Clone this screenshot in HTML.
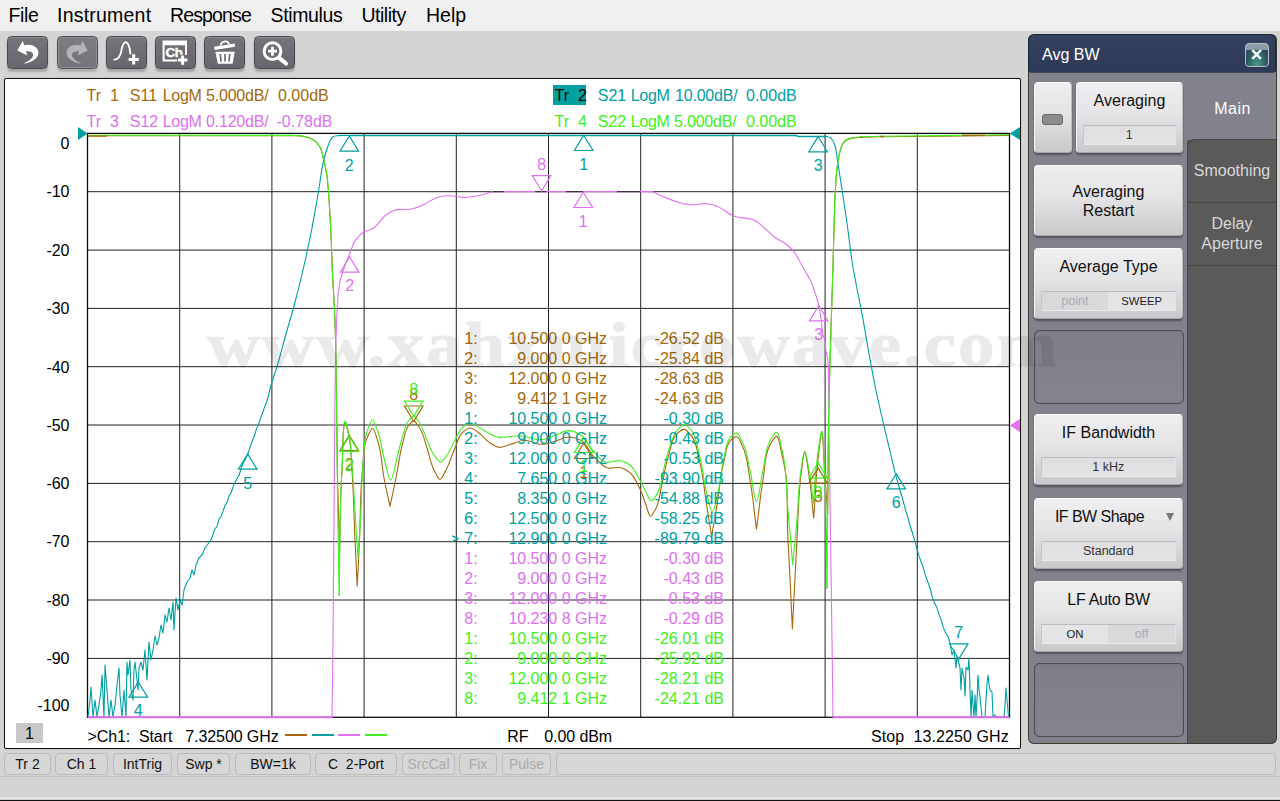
<!DOCTYPE html>
<html lang="en"><head><meta charset="utf-8"><title>Network Analyzer</title>
<style>
html,body{margin:0;padding:0;}
body{width:1280px;height:801px;position:relative;overflow:hidden;background:#d4d4d4;font-family:"Liberation Sans",sans-serif;color:#000;}
#menubar{position:absolute;left:0;top:0;width:1280px;height:31px;background:#f0f0f0;}
.mi{position:absolute;top:4px;font-size:19.5px;line-height:22px;white-space:pre;}
#toolbar{position:absolute;left:0;top:31px;width:1280px;height:47px;background:#d4d4d4;}
.tb{position:absolute;top:5px;width:41px;height:33px;border-radius:4.5px;background:linear-gradient(#74747a,#66666c);border:1px solid #4a4a4e;box-sizing:border-box;box-shadow:0 3px 2px rgba(0,0,0,.22), inset 0 1px 0 rgba(255,255,255,.18);}
.tb.dis{background:linear-gradient(#7c7c82,#737379);border-color:#505054;box-shadow:0 3px 2px rgba(0,0,0,.18), inset 0 0 0 1px #8e8e93;}
.tb svg{position:absolute;left:-1px;top:-1px;}
#chartwin{position:absolute;left:4px;top:78px;width:1017px;height:671px;box-sizing:border-box;background:#fff;border:1px solid #16160c;border-radius:2px;box-shadow:0 0 1px rgba(20,20,10,.55);}
#plot{position:absolute;left:0;top:0;}
.ct{position:absolute;font-size:16px;line-height:18px;white-space:pre;}
.r{text-align:right;}
#wm{position:absolute;left:207px;top:308px;z-index:20;font-family:"Liberation Serif",serif;font-weight:bold;font-size:64px;line-height:74px;letter-spacing:1.8px;color:#000;opacity:.08;-webkit-text-stroke:1px #000;white-space:pre;transform-origin:0 0;transform:scaleX(1.14);pointer-events:none;}
/* side panel */
#panel{position:absolute;left:1028px;top:34px;width:248.5px;height:710px;border-radius:6px;background:#5a5a5a;overflow:hidden;}
#pborder{position:absolute;left:0;top:0;right:0;bottom:0;border:1px solid #3c3c32;border-top:none;border-radius:6px;box-sizing:border-box;z-index:5;pointer-events:none;}
#ptitle{position:absolute;left:0;top:0;width:248px;height:39px;background:linear-gradient(#34425f,#2c3957);border:1px solid #1e2536;border-bottom-color:#3f465c;border-radius:6px 6px 4px 4px;box-sizing:border-box;z-index:6;}
#ptitle span{position:absolute;left:13px;top:10.5px;font-size:16px;line-height:18px;color:#fff;}
#pclose{position:absolute;left:215.5px;top:7.5px;width:24.5px;height:24px;box-sizing:border-box;border:1px solid #b4c0c6;border-radius:4px;background:radial-gradient(ellipse at 50% 100%,#4a9a8c 0%,rgba(74,154,140,0) 65%),linear-gradient(#909fa9 0%,#8a9aa4 27%,#2d505c 28%,#2a5660 100%);}
#pleft{position:absolute;left:0;top:37px;width:159px;height:672px;background:#82828c;box-sizing:border-box;}
#tabmain{position:absolute;left:159px;top:37px;width:89px;height:68px;background:#82828c;}
.tab{position:absolute;left:159px;width:89px;box-sizing:border-box;border:1px solid #46463e;border-right:none;background:#5a5a5a;color:#d8d8d8;font-size:16px;line-height:20px;text-align:center;}
.pb{position:absolute;left:6px;width:149px;height:71px;border-radius:4px;box-sizing:border-box;background:linear-gradient(#efeff1 0%,#e4e4e7 45%,#c9c9cc 100%);border:1px solid #bdbdc1;border-top-color:#fafafa;border-left-color:#f4f4f6;border-bottom-color:#a8a8ac;box-shadow:0 2px 2px rgba(0,0,0,.38);font-size:16px;line-height:19px;text-align:center;color:#111;}
.pb .lbl{position:absolute;left:0;width:100%;top:8px;}
.pb .val{position:absolute;left:5.5px;right:6px;top:41.5px;height:20px;box-sizing:border-box;border:1px solid #c6c6c9;border-top-color:#bcbcc0;border-bottom-color:#ebebed;border-right-color:#e2e2e4;background:linear-gradient(#dedee0,#e3e3e5);font-size:12.5px;line-height:18px;color:#333;}
.pe{position:absolute;left:6px;width:150px;height:74px;border-radius:5px;box-sizing:border-box;background:linear-gradient(#7e7e88,#84848e);border:1px solid #4c4c52;box-shadow:inset 0 0 1px #4c4c52;}
/* status */
.sb{position:absolute;top:753px;height:22px;box-sizing:border-box;border:1px solid #bababa;border-radius:4px;background:#d6d6d6;font-size:14px;line-height:20px;text-align:center;white-space:pre;color:#111;}
.sb.dis{color:#aaa;}
#bot0{position:absolute;left:0;top:776px;width:1280px;height:1px;background:#c2c2c2;}
#bot1{position:absolute;left:0;top:797px;width:1280px;height:2px;background:#e4e4e4;}
#bot2{position:absolute;left:0;top:799.5px;width:1280px;height:2px;background:#111;}
.tabtxt{position:absolute;left:160px;width:89px;text-align:center;font-size:16px;line-height:20px;color:#fff;letter-spacing:0.5px;}
.led{position:absolute;left:7px;top:31px;width:21px;height:11px;box-sizing:border-box;border-radius:3px;background:#8c8c8e;border:1px solid #6a6a6c;}
.tog{display:flex;padding:0;}
.tog span{flex:1;display:block;height:18px;}
.tog .on{background:#e4e4e6;color:#222;font-size:11.3px;}
.tog .off{background:#d9d9dc;color:#a9a9b2;}
.arr{position:absolute;left:131px;top:14px;width:0;height:0;border-left:4.5px solid transparent;border-right:4.5px solid transparent;border-top:8px solid #777;}
#pwrap{position:absolute;left:0;top:1px;width:248.5px;height:709px;}

</style></head>
<body>
<div id="menubar"><span class="mi" style="left:8.5px;letter-spacing:-0.33px">File</span><span class="mi" style="left:57px;letter-spacing:0.22px">Instrument</span><span class="mi" style="left:170px;letter-spacing:-0.86px">Response</span><span class="mi" style="left:270.5px;letter-spacing:-0.36px">Stimulus</span><span class="mi" style="left:361.5px;letter-spacing:-0.5px">Utility</span><span class="mi" style="left:426px;letter-spacing:0px">Help</span></div>
<div id="toolbar"><div class="tb" style="left:7px"><svg width="41" height="33" viewBox="0 0 41 33"><path d="M10.3 14.6L15.6 5L17.4 9.2C24 7.4 31.6 10.4 31.4 17C31.1 23.2 24 26.6 16.5 27.7C22 25 26.6 22 26.1 18.6C25.7 15.6 22 14.8 18.9 15.4L20.4 19.5Z" fill="#fff"/></svg></div>
<div class="tb dis" style="left:56.5px"><svg width="41" height="33" viewBox="0 0 41 33"><path d="M30.7 14.6L25.4 5L23.6 9.2C17 7.4 9.4 10.4 9.6 17C9.9 23.2 17 26.6 24.5 27.7C19 25 14.4 22 14.9 18.6C15.3 15.6 19 14.8 22.1 15.4L20.6 19.5Z" fill="#b4b4b8"/></svg></div>
<div class="tb" style="left:106px"><svg width="41" height="33" viewBox="0 0 41 33"><path d="M8.3 23.6C12.4 23.6 14.1 21 15.2 15.4C16.3 9 17.5 6.2 19.8 6.2C22.2 6.2 23.5 9.6 24.5 17.6" fill="none" stroke="#fff" stroke-width="1.9" stroke-linecap="round"/><path d="M22.6 23.4H32.8M27.7 18.3V28.5" stroke="#fff" stroke-width="3"/></svg></div>
<div class="tb" style="left:155px"><svg width="41" height="33" viewBox="0 0 41 33"><path d="M7.6 4.4H32V19H30V9.3H9.6V23.5H22V25.5H7.6Z" fill="#fff"/><text x="10.6" y="21.2" font-family="Liberation Sans, sans-serif" font-weight="bold" font-size="13.5" fill="#fff" stroke="#fff" stroke-width="0.45" letter-spacing="-0.5">Ch</text><path d="M22.3 24.1H33M27.6 18.8V29.4" stroke="#6c6c72" stroke-width="5.4"/><path d="M22.9 24.1H32.4M27.6 19.4V28.8" stroke="#fff" stroke-width="3"/></svg></div>
<div class="tb" style="left:204px"><svg width="41" height="33" viewBox="0 0 41 33"><path d="M16.7 9.6A4.4 4.4 0 0 1 25.2 8.3" fill="none" stroke="#fff" stroke-width="1.8"/><path d="M10.4 12.3L30.9 9.2" stroke="#fff" stroke-width="3.2"/><path d="M11.3 15.8H30.7L28.6 27.7H13.8Z" fill="#fff"/><path d="M16.3 18L17 25.6M21 18V25.6M25.7 18L25 25.6" stroke="#6c6c72" stroke-width="1.7"/></svg></div>
<div class="tb" style="left:253.5px"><svg width="41" height="33" viewBox="0 0 41 33"><circle cx="18.5" cy="15.2" r="8.4" fill="none" stroke="#fff" stroke-width="3"/><path d="M14 15.2H23M18.5 10.7V19.7" stroke="#fff" stroke-width="2.8"/><path d="M24.9 21.6L32 27.5" stroke="#fff" stroke-width="4.2" stroke-linecap="round"/></svg></div>
</div>
<div id="chartwin"></div>
<svg id="plot" width="1280" height="801" viewBox="0 0 1280 801">
<path d="M179.7 133.4V717.3M87.5 191.7H1009.5M271.9 133.4V717.3M87.5 250.1H1009.5M364.1 133.4V717.3M87.5 308.4H1009.5M456.3 133.4V717.3M87.5 366.7H1009.5M548.5 133.4V717.3M87.5 425.0H1009.5M640.7 133.4V717.3M87.5 483.4H1009.5M732.9 133.4V717.3M87.5 541.7H1009.5M825.1 133.4V717.3M87.5 600.0H1009.5M917.3 133.4V717.3M87.5 658.4H1009.5" stroke="#222" stroke-width="1.0" fill="none"/>
<rect x="87.5" y="133.4" width="922.0" height="583.9" stroke="#0c0c0c" stroke-width="1.3" fill="none"/>
<g fill="none" stroke="#a5680c" stroke-width="1.1" stroke-linejoin="round">
<path d="M88.0 135.6L292.0 135.8"/><path d="M880.0 136.8L940.0 136.2L1009.0 135.4"/><path d="M292.0 135.8C294.7 135.8 297.4 135.6 300.0 135.9C302.0 136.1 304.0 136.5 306.0 137.0C308.2 137.6 310.5 138.2 312.4 139.3C315.2 140.9 317.6 143.6 319.4 146.3C322.1 150.2 322.6 155.6 323.8 160.3C324.8 164.3 325.7 168.3 326.4 172.3C327.5 178.7 327.9 185.3 328.5 191.8C329.2 200.0 329.5 208.3 330.0 216.5C330.5 224.7 331.0 232.8 331.3 241.0C331.6 248.5 331.7 256.0 332.0 263.5C332.4 274.2 333.2 284.8 333.7 295.5C334.1 304.2 334.7 312.8 335.0 321.5C335.6 336.0 335.7 350.5 336.0 365.0C336.2 376.7 336.4 388.3 336.6 400.0C337.0 426.7 337.1 453.3 337.6 480.0C338.1 504.0 338.9 528.0 339.5 552.0"/><path d="M339.5 552.0C340.3 524.7 340.2 497.3 342.0 470.0C343.0 454.6 342.4 415.3 345.9 424.0C346.8 426.2 348.1 431.5 349.0 435.3C351.6 446.6 351.2 458.4 352.0 470.0C353.7 493.3 353.9 516.7 355.0 540.0C355.7 555.3 356.5 570.7 357.2 586.0C358.0 570.7 358.8 555.3 359.5 540.0C360.6 516.7 360.0 493.2 362.5 470.0C363.7 459.3 362.6 447.7 367.0 438.0C368.5 434.7 370.8 428.9 372.4 428.5C374.6 428.0 376.4 437.4 378.0 442.0C381.9 453.5 381.7 466.1 384.0 478.0C385.8 487.5 388.0 496.9 390.0 506.3C392.0 496.9 394.1 487.4 396.0 478.0C398.4 466.0 399.5 453.7 403.0 442.0C404.7 436.3 405.1 429.4 409.0 425.0C410.3 423.6 412.1 421.2 413.5 421.1C415.4 420.9 417.4 424.9 419.0 427.0C423.5 432.9 424.5 440.9 427.0 448.0C429.5 455.3 430.5 463.2 434.0 470.0C435.7 473.3 438.0 479.5 440.0 479.5C442.0 479.5 444.2 473.3 446.0 470.0C449.8 463.1 451.7 455.2 455.0 448.0C457.5 442.6 458.6 435.7 463.0 432.0C465.0 430.3 467.7 428.2 470.0 428.0C473.0 427.8 476.2 431.1 479.0 433.0C483.1 435.8 485.9 440.4 490.0 443.0C492.8 444.8 495.9 446.9 499.0 447.3C502.5 447.7 506.3 445.5 510.0 444.5C514.9 443.2 519.6 440.4 524.5 440.3C529.6 440.2 534.7 443.9 540.0 444.2C541.3 444.3 542.7 444.3 544.0 444.2C548.1 443.9 552.0 442.2 556.0 441.0C560.2 439.8 564.3 437.1 568.5 437.0C572.5 436.9 577.2 438.3 580.7 440.2C587.0 443.5 589.4 452.5 594.7 457.7C598.5 461.4 602.3 466.2 607.0 467.8C611.2 469.2 616.7 466.5 621.0 467.8C624.1 468.7 627.2 470.5 629.7 472.5C634.6 476.4 637.2 483.2 640.0 489.0C642.5 494.1 643.9 499.7 646.0 505.0C647.5 508.8 648.7 516.5 650.6 516.3C652.1 516.1 654.4 511.2 655.9 508.4C659.8 501.1 660.0 492.2 662.0 484.0C664.1 475.3 665.3 466.2 668.0 457.7C670.8 449.0 671.4 437.5 678.6 432.3C680.2 431.2 682.1 429.5 683.8 429.4C686.3 429.3 688.8 432.9 690.8 435.0C697.0 441.5 697.2 452.3 699.6 461.2C703.4 475.4 704.3 490.4 706.6 505.0C708.3 515.3 709.9 525.7 711.6 536.0C713.4 525.7 715.3 515.3 717.0 505.0C719.5 490.4 720.1 475.3 724.0 461.0C725.9 453.9 725.7 444.7 731.0 440.0C732.5 438.6 734.8 436.6 736.4 436.5C739.1 436.4 740.7 442.7 742.4 446.0C747.7 456.2 747.9 468.6 750.0 480.0C753.0 496.3 754.3 512.9 756.5 529.3C758.7 512.9 760.2 496.3 763.0 480.0C765.0 468.3 764.2 455.2 770.0 445.0C771.7 442.0 774.3 437.2 776.0 436.5C779.1 435.2 780.3 448.8 782.0 455.0C789.5 482.3 786.3 511.6 788.0 540.0C789.8 569.6 790.9 599.3 792.4 629.0C793.9 599.3 795.3 569.7 797.0 540.0C798.2 518.3 798.1 496.5 801.0 475.0C802.0 467.4 803.4 452.4 804.7 452.4C806.0 452.4 807.8 467.4 809.0 475.0C811.3 489.3 812.1 503.9 813.7 518.3C815.0 500.5 815.6 482.7 817.5 465.0C818.7 454.1 820.6 433.0 821.7 432.3C823.0 431.5 823.6 457.4 824.5 470.0C825.6 484.6 826.6 499.2 827.7 513.8"/><path d="M827.7 513.8C828.1 475.9 828.2 437.9 829.0 400.0C829.9 355.2 831.7 310.3 833.0 265.5C833.3 253.8 833.6 242.2 834.0 230.5C834.4 217.7 834.5 204.8 835.3 192.0C835.8 183.2 836.1 174.3 837.4 165.5C838.1 160.8 838.7 156.0 840.0 151.5C840.8 149.0 841.2 146.1 842.7 144.0C843.8 142.4 845.3 140.8 847.0 139.8C849.0 138.6 851.6 138.4 854.0 138.0C856.3 137.6 858.7 137.5 861.0 137.3C867.3 136.8 873.7 137.0 880.0 136.8"/>
</g>
<g fill="none" stroke="#00a0a0" stroke-width="1.1" stroke-linejoin="round">
<path d="M88.0 717.0L90.0 700.0L91.0 687.0L93.0 717.0L95.0 700.0L97.0 717.0L99.0 705.0L101.0 690.0L102.0 675.0L104.0 717.0L105.0 665.0L107.0 690.0L109.0 717.0L111.0 700.0L113.0 717.0L115.0 705.0L117.0 685.0L119.0 668.0L120.0 695.0L122.0 717.0L124.0 690.0L126.0 717.0L127.0 662.0L128.0 675.0L130.0 660.0L131.0 690.0L133.0 700.0L134.0 670.0L135.0 662.0L137.0 680.0L138.0 690.0L139.0 668.0L141.0 662.0L143.0 670.0L145.0 650.0L147.0 680.0L149.0 642.0L151.0 660.0L153.0 650.0L155.0 636.0L157.0 645.0L159.0 638.0L161.0 625.0L163.0 633.0L165.0 615.0L167.0 622.0L169.0 608.0L171.0 620.0L173.0 602.0L174.0 630.0L176.0 598.0L178.0 610.0L180.0 600.0L182.0 605.0L184.0 590.0L187.0 582.0L190.0 578.0L192.0 570.0L194.0 575.0L196.0 565.0L199.0 558.0L202.0 555.0L205.0 548.0L211.0 540.0"/><path d="M211.0 540.0L213.0 534.3L215.0 528.7L217.0 526.8L219.0 519.1L221.0 516.8L223.0 511.4L225.0 505.3L227.0 502.7L229.0 496.1L231.1 492.8L233.1 486.6L235.2 481.9L237.2 478.2L239.3 474.6L241.3 467.6L243.4 463.0L245.4 459.2L247.5 455.0L249.7 448.2L251.9 441.8L254.1 436.7L256.3 429.4L258.5 424.4L260.7 417.8L262.9 411.8L265.1 405.9L267.3 400.0"/><path d="M267.3 400.0C268.5 395.3 269.5 390.6 270.8 386.0C272.6 379.5 275.0 373.1 277.0 366.6C280.2 356.1 282.7 345.5 285.7 335.0C288.2 326.0 291.0 317.0 293.5 308.0C297.8 292.1 301.7 276.1 305.3 260.0C307.5 250.0 309.6 240.0 311.6 230.0C314.1 217.2 316.3 204.3 318.5 191.4C320.3 180.9 321.2 170.3 323.8 160.0C325.0 155.3 326.3 150.5 328.0 146.0C328.8 144.0 329.3 141.8 330.5 140.0C331.3 138.8 332.2 137.3 333.4 136.6C334.7 135.8 336.5 135.8 338.0 135.6C341.6 135.0 345.3 135.5 349.0 135.5"/><path d="M349.0 135.5L796.0 135.5L798.0 136.4L826.0 136.4" stroke-width="1.5"/><path d="M826.0 136.4C827.3 136.8 828.9 136.8 830.0 137.5C831.0 138.1 831.8 139.1 832.5 140.0C833.8 141.7 834.3 144.0 835.0 146.0C836.5 150.5 836.6 155.3 837.4 160.0C839.1 170.4 840.7 180.9 842.3 191.4C843.9 201.9 845.5 212.5 847.0 223.0C848.9 236.3 850.2 249.7 852.3 263.0C854.7 278.3 858.1 293.5 861.0 308.7C866.0 335.1 870.1 361.7 875.5 388.0C881.4 416.7 888.7 445.1 895.3 473.7"/><path d="M895.3 473.7L897.4 481.2L899.6 489.0L901.8 496.0L903.9 503.9L906.0 511.5L908.2 518.7L910.3 526.5L912.5 533.0L914.6 540.4L916.8 548.2L919.0 556.1L921.2 562.0L923.4 568.3L925.6 575.8L927.8 582.0L930.0 588.0L932.2 596.6L934.4 602.9L936.6 606.7L938.9 614.1L941.1 619.7L943.3 627.4L945.5 632.5L947.8 636.0L950.0 643.0"/><path d="M950.0 643.0L952.0 655.0L954.0 650.0L956.0 668.0L957.0 656.0L958.0 660.0L960.0 668.0L961.0 690.0L962.0 668.0L964.0 678.0L965.0 696.0L966.0 667.0L968.0 670.0L969.0 658.0L970.0 690.0L971.0 717.0L972.0 690.0L973.0 705.0L974.0 717.0L975.0 695.0L976.0 717.0L977.0 700.0L978.0 675.0L979.0 690.0L980.0 697.0L982.0 717.0L985.0 717.0L986.0 700.0L987.0 683.0L988.0 675.0L989.0 685.0L990.0 690.0L992.0 692.0L993.0 717.0L995.0 715.0L996.0 717.0L1004.0 717.0L1005.0 705.0L1006.0 688.0L1007.0 700.0L1008.5 717.0"/>
</g>
<g fill="none" stroke="#e070f0" stroke-width="1.1" stroke-linejoin="round">
<path d="M88 717.3H332.5M833 717.3H1009.5" stroke-width="1.7"/><path d="M88.0 717.0L332.0 717.0L333.0 640.0L335.0 400.0L335.2 382.0L336.0 339.0L337.0 312.0L338.0 295.0L340.0 281.0L345.0 265.0"/><path d="M345.0 265.0C346.3 261.7 347.7 258.5 349.0 255.2C349.7 253.5 350.3 251.7 351.0 250.0C352.3 246.8 353.4 243.3 355.3 240.4C357.3 237.4 360.0 234.4 363.0 232.5C365.6 230.8 369.2 230.5 372.0 229.0C377.7 225.9 380.7 218.8 386.0 215.0C388.2 213.4 390.5 211.7 393.0 210.7C398.2 208.5 404.7 210.5 410.3 209.3C415.1 208.3 419.9 206.6 424.3 204.5C427.9 202.8 431.1 199.9 434.8 198.4C437.0 197.5 439.4 196.8 441.8 196.3C446.3 195.4 451.2 195.7 455.8 196.3C457.5 196.5 459.3 197.0 461.0 197.2C467.3 197.9 473.8 196.5 480.0 195.3C484.4 194.5 488.6 192.4 493.0 191.9C495.3 191.6 497.7 191.7 500.0 191.6"/><path d="M500.0 191.6L652.0 191.6"/><path d="M652.0 191.6C654.7 192.8 657.3 194.1 660.0 195.3C665.7 197.8 671.5 200.3 677.5 202.0C681.5 203.1 685.6 204.3 689.7 204.7C695.4 205.3 701.3 203.0 707.0 203.7C710.0 204.1 713.1 204.8 716.0 205.8C722.3 207.9 727.2 213.6 733.4 216.0C740.0 218.6 748.2 217.2 754.4 220.3C759.6 222.9 763.8 227.7 768.4 231.6C770.8 233.6 772.9 235.9 775.4 237.8C778.7 240.2 782.8 241.5 786.0 244.0C789.2 246.5 792.1 249.4 794.6 252.6C797.5 256.3 799.3 260.9 801.6 265.0C802.5 266.7 803.5 268.3 804.4 270.0C806.7 274.0 809.4 277.7 811.2 281.9C812.2 284.1 813.0 286.5 813.8 288.8C815.7 294.3 817.4 299.9 818.8 305.6C819.8 310.3 820.5 315.2 821.2 320.0C822.0 325.0 821.9 330.1 823.1 335.0C823.6 337.1 824.6 339.2 825.0 341.3C825.6 344.1 825.3 347.1 825.8 350.0C826.2 352.5 827.1 355.0 827.5 357.5C828.3 362.3 828.1 367.2 828.3 372.0C828.7 381.3 828.5 390.7 828.6 400.0"/><path d="M828.6 400.0L832.0 640.0L833.0 717.0L1009.0 717.0"/>
</g>
<path d="M493 191.7H503.7M535 191.7H546.5M565.8 191.7H583M617 191.7H640" stroke="#222" stroke-width="1" fill="none"/>
<g fill="none" stroke="#40f020" stroke-width="1.1" stroke-linejoin="round">
<path d="M88.0 135.2L292.0 135.4"/><path d="M880.0 136.3L940.0 135.6L1009.0 134.8"/><path d="M292.0 135.4C294.7 135.5 297.4 135.3 300.0 135.6C302.0 135.8 304.0 136.3 306.0 136.8C308.2 137.4 310.5 137.9 312.4 139.0C315.2 140.6 317.6 143.3 319.4 146.0C322.1 149.9 322.6 155.3 323.8 160.0C324.8 164.0 325.7 168.0 326.4 172.0C327.5 178.4 327.9 184.9 328.5 191.4C329.2 199.6 329.5 207.8 330.0 216.0C330.5 224.1 331.0 232.3 331.3 240.4C331.6 247.9 331.7 255.5 332.0 263.0C332.4 273.7 333.2 284.3 333.7 295.0C334.1 303.7 334.7 312.3 335.0 321.0C335.6 335.7 335.7 350.3 336.0 365.0C336.2 376.7 336.3 388.3 336.5 400.0C336.9 433.3 337.0 466.7 337.5 500.0C337.9 532.0 338.6 564.0 339.2 596.0"/><path d="M339.2 596.0C340.1 554.0 339.3 511.9 342.0 470.0C343.0 454.1 342.9 413.9 345.9 422.3C346.8 424.8 348.1 431.5 349.0 436.2C350.7 445.7 351.1 455.4 352.0 465.0C353.6 483.3 354.3 501.7 355.5 520.0C356.3 532.7 357.2 545.3 358.0 558.0C358.8 545.3 359.8 532.7 360.5 520.0C361.6 501.7 361.3 483.3 363.0 465.0C364.0 454.0 363.4 442.4 367.0 432.0C368.4 427.8 370.6 419.7 372.4 419.7C374.2 419.7 376.4 427.8 378.0 432.0C381.1 440.3 381.7 449.4 384.0 458.0C386.0 465.4 388.6 480.1 390.8 480.0C393.0 479.9 395.0 465.4 397.0 458.0C399.1 450.4 400.4 442.5 403.0 435.0C404.7 429.9 405.5 423.9 409.0 420.0C410.3 418.6 412.1 416.3 413.5 416.2C415.4 416.0 417.4 419.9 419.0 422.0C423.0 427.1 424.3 434.0 427.0 440.0C429.3 445.0 430.7 450.6 434.0 455.0C435.9 457.5 438.4 462.0 440.6 462.0C442.8 462.0 445.1 457.5 447.0 455.0C450.4 450.5 452.2 444.9 455.0 440.0C457.5 435.6 459.1 430.0 463.0 427.0C465.1 425.4 467.9 423.4 470.3 423.2C473.5 422.9 476.8 426.3 480.0 428.0C483.4 429.9 486.5 432.3 490.0 434.0C492.7 435.3 495.4 436.7 498.3 437.2C502.1 437.9 506.1 436.7 510.0 436.5C513.7 436.3 517.4 435.7 521.0 435.8C527.4 436.0 533.6 440.2 540.0 439.8C542.5 439.6 545.1 439.2 547.5 438.5C551.2 437.5 554.4 435.3 558.0 434.0C561.4 432.7 565.0 430.6 568.5 430.6C572.6 430.6 577.2 432.8 580.7 435.0C586.1 438.4 588.5 445.8 593.0 450.7C596.7 454.7 600.3 460.4 605.0 462.0C609.6 463.6 616.0 459.6 621.0 460.8C624.0 461.5 627.2 462.9 629.7 464.7C634.6 468.2 636.9 475.0 640.0 480.4C642.2 484.2 643.9 488.2 646.0 492.0C647.7 495.1 649.5 501.0 651.5 501.0C653.4 501.0 655.9 495.6 657.6 492.7C661.0 486.6 661.2 478.9 663.0 472.0C664.7 465.5 665.9 458.8 668.0 452.4C670.7 444.3 672.3 434.4 678.6 428.8C680.4 427.2 682.7 424.5 684.7 424.5C686.8 424.5 689.0 427.8 690.8 429.7C696.9 436.3 697.2 447.1 699.6 456.0C702.9 468.0 703.5 480.6 706.6 492.7C708.3 499.2 710.3 512.0 712.2 512.0C714.1 512.0 716.4 499.2 718.0 492.7C720.9 481.2 720.9 469.1 724.0 457.7C725.9 450.6 725.8 441.6 731.0 436.7C732.5 435.3 734.7 433.0 736.3 432.9C738.9 432.7 740.7 438.8 742.4 442.0C747.0 450.4 747.7 460.6 750.0 470.0C752.5 480.5 754.3 501.8 756.5 501.8C758.7 501.8 760.6 480.6 763.0 470.0C765.2 460.3 765.2 449.6 770.0 441.0C771.7 438.0 774.3 432.9 776.0 432.3C779.0 431.2 780.3 444.0 782.0 450.0C787.4 469.3 786.1 490.0 788.0 510.0C789.7 528.2 791.1 546.5 792.7 564.7C794.1 549.8 795.7 534.9 797.0 520.0C798.5 503.3 798.3 486.5 801.0 470.0C802.0 463.6 803.4 451.0 804.7 451.0C806.0 451.0 807.8 463.6 809.0 470.0C811.1 480.9 811.9 492.0 813.4 503.0C814.6 488.7 815.1 474.2 817.0 460.0C818.3 450.4 820.5 432.7 821.7 431.4C823.3 429.6 823.7 457.1 824.5 470.0C826.9 509.5 826.2 549.1 827.0 588.6"/><path d="M827.0 588.6C827.7 525.7 827.6 462.9 829.0 400.0C830.0 355.0 831.7 310.0 833.0 265.0C833.3 253.3 833.6 241.7 834.0 230.0C834.4 217.1 834.5 204.2 835.3 191.4C835.8 182.6 836.1 173.7 837.4 165.0C838.1 160.3 838.7 155.5 840.0 151.0C840.8 148.4 841.2 145.5 842.7 143.4C843.8 141.8 845.3 140.3 847.0 139.3C849.0 138.1 851.6 138.0 854.0 137.6C856.3 137.2 858.7 137.1 861.0 136.9C867.3 136.4 873.7 136.5 880.0 136.3"/>
</g>
<path d="M88 136.1H107M962 135.3H985M880 136.5H884M860 137.1H862" stroke="#a5680c" stroke-width="1.3" fill="none"/>
<g font-family="Liberation Sans, sans-serif" font-size="16">
<path d="M583.7 443.3L574.4 458.5H593.0Z" fill="none" stroke="#a5680c" stroke-width="1.2"/>
<text x="583.7" y="477.8" fill="#a5680c" text-anchor="middle">1</text>
<path d="M349.3 435.3L340.0 450.5H358.6Z" fill="none" stroke="#a5680c" stroke-width="1.2"/>
<text x="349.3" y="469.8" fill="#a5680c" text-anchor="middle">2</text>
<path d="M818.1 467.9L808.8 483.1H827.4Z" fill="none" stroke="#a5680c" stroke-width="1.2"/>
<text x="818.1" y="502.4" fill="#a5680c" text-anchor="middle">3</text>
<path d="M413.7 421.2L404.4 406.0H423.0Z" fill="none" stroke="#a5680c" stroke-width="1.2"/>
<text x="413.7" y="400.2" fill="#a5680c" text-anchor="middle">8</text>
<path d="M583.7 135.3L574.4 150.5H593.0Z" fill="none" stroke="#00a0a0" stroke-width="1.2"/>
<text x="583.7" y="169.8" fill="#00a0a0" text-anchor="middle">1</text>
<path d="M349.3 136.0L340.0 151.2H358.6Z" fill="none" stroke="#00a0a0" stroke-width="1.2"/>
<text x="349.3" y="170.5" fill="#00a0a0" text-anchor="middle">2</text>
<path d="M818.1 136.6L808.8 151.8H827.4Z" fill="none" stroke="#00a0a0" stroke-width="1.2"/>
<text x="818.1" y="171.1" fill="#00a0a0" text-anchor="middle">3</text>
<path d="M138.3 681.9L129.0 697.1H147.6Z" fill="none" stroke="#00a0a0" stroke-width="1.2"/>
<text x="138.3" y="716.4" fill="#00a0a0" text-anchor="middle">4</text>
<path d="M247.7 454.0L238.4 469.2H257.0Z" fill="none" stroke="#00a0a0" stroke-width="1.2"/>
<text x="247.7" y="488.5" fill="#00a0a0" text-anchor="middle">5</text>
<path d="M896.2 473.7L886.9 488.9H905.5Z" fill="none" stroke="#00a0a0" stroke-width="1.2"/>
<text x="896.2" y="508.2" fill="#00a0a0" text-anchor="middle">6</text>
<path d="M958.7 659.0L949.4 643.8H968.0Z" fill="none" stroke="#00a0a0" stroke-width="1.2"/>
<text x="958.7" y="638.0" fill="#00a0a0" text-anchor="middle">7</text>
<path d="M583.3 192.3L574.0 207.5H592.6Z" fill="none" stroke="#e070f0" stroke-width="1.2"/>
<text x="583.3" y="226.8" fill="#e070f0" text-anchor="middle">1</text>
<path d="M349.6 256.9L340.3 272.1H358.9Z" fill="none" stroke="#e070f0" stroke-width="1.2"/>
<text x="349.6" y="291.4" fill="#e070f0" text-anchor="middle">2</text>
<path d="M818.8 305.6L809.5 320.8H828.0Z" fill="none" stroke="#e070f0" stroke-width="1.2"/>
<text x="818.8" y="340.1" fill="#e070f0" text-anchor="middle">3</text>
<path d="M541.6 190.8L532.3 175.6H550.9Z" fill="none" stroke="#e070f0" stroke-width="1.2"/>
<text x="541.6" y="169.8" fill="#e070f0" text-anchor="middle">8</text>
<path d="M583.7 437.3L574.4 452.5H593.0Z" fill="none" stroke="#40f020" stroke-width="1.2"/>
<text x="583.7" y="471.8" fill="#40f020" text-anchor="middle">1</text>
<path d="M349.3 436.2L340.0 451.4H358.6Z" fill="none" stroke="#40f020" stroke-width="1.2"/>
<text x="349.3" y="470.7" fill="#40f020" text-anchor="middle">2</text>
<path d="M818.1 463.0L808.8 478.2H827.4Z" fill="none" stroke="#40f020" stroke-width="1.2"/>
<text x="818.1" y="497.5" fill="#40f020" text-anchor="middle">3</text>
<path d="M413.7 416.3L404.4 401.1H423.0Z" fill="none" stroke="#40f020" stroke-width="1.2"/>
<text x="413.7" y="395.3" fill="#40f020" text-anchor="middle">8</text>
</g>
<path d="M78 127L87.5 133.5L78 140Z" fill="#00a0a0"/>
<path d="M1020 127L1009.8 133.5L1020 140Z" fill="#00a0a0"/>
<path d="M1020 419L1009.8 425.5L1020 432Z" fill="#e070f0"/>
</svg>
<div style="position:absolute;left:553px;top:85px;width:33px;height:20px;background:#00a0a0"></div>
<span class="ct" style="top:86.5px;left:86.5px;color:#a5680c;">Tr  1</span>
<span class="ct" style="top:86.5px;left:129.8px;color:#a5680c;">S11</span>
<span class="ct" style="top:86.5px;left:162.7px;color:#a5680c;letter-spacing:-0.3px;">LogM</span>
<span class="ct" style="top:86.5px;left:206.0px;color:#a5680c;letter-spacing:-0.2px;">5.000dB/</span>
<span class="ct" style="top:86.5px;left:278.0px;color:#a5680c;">0.00dB</span>
<span class="ct" style="top:112.5px;left:86.5px;color:#e070f0;">Tr  3</span>
<span class="ct" style="top:112.5px;left:129.8px;color:#e070f0;">S12</span>
<span class="ct" style="top:112.5px;left:162.7px;color:#e070f0;letter-spacing:-0.3px;">LogM</span>
<span class="ct" style="top:112.5px;left:206.0px;color:#e070f0;letter-spacing:-0.2px;">0.120dB/</span>
<span class="ct" style="top:112.5px;left:276.5px;color:#e070f0;">-0.78dB</span>
<span class="ct" style="top:86.5px;left:554.5px;color:#000;">Tr  2</span>
<span class="ct" style="top:86.5px;left:597.8px;color:#00a0a0;">S21</span>
<span class="ct" style="top:86.5px;left:630.7px;color:#00a0a0;letter-spacing:-0.3px;">LogM</span>
<span class="ct" style="top:86.5px;left:675.0px;color:#00a0a0;letter-spacing:-0.2px;">10.00dB/</span>
<span class="ct" style="top:86.5px;left:746.0px;color:#00a0a0;">0.00dB</span>
<span class="ct" style="top:112.5px;left:554.5px;color:#40f020;">Tr  4</span>
<span class="ct" style="top:112.5px;left:597.8px;color:#40f020;">S22</span>
<span class="ct" style="top:112.5px;left:630.7px;color:#40f020;letter-spacing:-0.3px;">LogM</span>
<span class="ct" style="top:112.5px;left:674.0px;color:#40f020;letter-spacing:-0.2px;">5.000dB/</span>
<span class="ct" style="top:112.5px;left:746.0px;color:#40f020;">0.00dB</span>
<span class="ct" style="top:134.5px;right:1210.5px;color:#000;">0</span>
<span class="ct" style="top:183.0px;right:1210.5px;color:#000;">-10</span>
<span class="ct" style="top:241.5px;right:1210.5px;color:#000;">-20</span>
<span class="ct" style="top:299.8px;right:1210.5px;color:#000;">-30</span>
<span class="ct" style="top:358.5px;right:1210.5px;color:#000;">-40</span>
<span class="ct" style="top:416.5px;right:1210.5px;color:#000;">-50</span>
<span class="ct" style="top:475.0px;right:1210.5px;color:#000;">-60</span>
<span class="ct" style="top:533.0px;right:1210.5px;color:#000;">-70</span>
<span class="ct" style="top:591.5px;right:1210.5px;color:#000;">-80</span>
<span class="ct" style="top:650.0px;right:1210.5px;color:#000;">-90</span>
<span class="ct" style="top:696.5px;right:1210.5px;color:#000;">-100</span>
<span class="ct" style="top:330.0px;left:464.3px;color:#a5680c;">1:</span>
<span class="ct" style="top:330.0px;right:673.1px;color:#a5680c;letter-spacing:-0.02px;">10.500 0 GHz</span>
<span class="ct" style="top:330.0px;right:556.0px;color:#a5680c;">-26.52 dB</span>
<span class="ct" style="top:350.0px;left:464.3px;color:#a5680c;">2:</span>
<span class="ct" style="top:350.0px;right:673.1px;color:#a5680c;letter-spacing:-0.02px;">9.000 0 GHz</span>
<span class="ct" style="top:350.0px;right:556.0px;color:#a5680c;">-25.84 dB</span>
<span class="ct" style="top:370.0px;left:464.3px;color:#a5680c;">3:</span>
<span class="ct" style="top:370.0px;right:673.1px;color:#a5680c;letter-spacing:-0.02px;">12.000 0 GHz</span>
<span class="ct" style="top:370.0px;right:556.0px;color:#a5680c;">-28.63 dB</span>
<span class="ct" style="top:390.0px;left:464.3px;color:#a5680c;">8:</span>
<span class="ct" style="top:390.0px;right:673.1px;color:#a5680c;letter-spacing:-0.02px;">9.412 1 GHz</span>
<span class="ct" style="top:390.0px;right:556.0px;color:#a5680c;">-24.63 dB</span>
<span class="ct" style="top:410.0px;left:464.3px;color:#00a0a0;">1:</span>
<span class="ct" style="top:410.0px;right:673.1px;color:#00a0a0;letter-spacing:-0.02px;">10.500 0 GHz</span>
<span class="ct" style="top:410.0px;right:556.0px;color:#00a0a0;">-0.30 dB</span>
<span class="ct" style="top:430.0px;left:464.3px;color:#00a0a0;">2:</span>
<span class="ct" style="top:430.0px;right:673.1px;color:#00a0a0;letter-spacing:-0.02px;">9.000 0 GHz</span>
<span class="ct" style="top:430.0px;right:556.0px;color:#00a0a0;">-0.43 dB</span>
<span class="ct" style="top:450.0px;left:464.3px;color:#00a0a0;">3:</span>
<span class="ct" style="top:450.0px;right:673.1px;color:#00a0a0;letter-spacing:-0.02px;">12.000 0 GHz</span>
<span class="ct" style="top:450.0px;right:556.0px;color:#00a0a0;">-0.53 dB</span>
<span class="ct" style="top:470.0px;left:464.3px;color:#00a0a0;">4:</span>
<span class="ct" style="top:470.0px;right:673.1px;color:#00a0a0;letter-spacing:-0.02px;">7.650 0 GHz</span>
<span class="ct" style="top:470.0px;right:556.0px;color:#00a0a0;">-93.90 dB</span>
<span class="ct" style="top:490.0px;left:464.3px;color:#00a0a0;">5:</span>
<span class="ct" style="top:490.0px;right:673.1px;color:#00a0a0;letter-spacing:-0.02px;">8.350 0 GHz</span>
<span class="ct" style="top:490.0px;right:556.0px;color:#00a0a0;">-54.88 dB</span>
<span class="ct" style="top:510.0px;left:464.3px;color:#00a0a0;">6:</span>
<span class="ct" style="top:510.0px;right:673.1px;color:#00a0a0;letter-spacing:-0.02px;">12.500 0 GHz</span>
<span class="ct" style="top:510.0px;right:556.0px;color:#00a0a0;">-58.25 dB</span>
<span class="ct" style="top:530.0px;left:464.3px;color:#00a0a0;">7:</span>
<span class="ct" style="top:530.0px;right:673.1px;color:#00a0a0;letter-spacing:-0.02px;">12.900 0 GHz</span>
<span class="ct" style="top:530.0px;right:556.0px;color:#00a0a0;">-89.79 dB</span>
<span class="ct" style="top:530.0px;left:451.5px;color:#00a0a0;font-size:12px;font-weight:bold;">&gt;</span>
<span class="ct" style="top:550.0px;left:464.3px;color:#e070f0;">1:</span>
<span class="ct" style="top:550.0px;right:673.1px;color:#e070f0;letter-spacing:-0.02px;">10.500 0 GHz</span>
<span class="ct" style="top:550.0px;right:556.0px;color:#e070f0;">-0.30 dB</span>
<span class="ct" style="top:570.0px;left:464.3px;color:#e070f0;">2:</span>
<span class="ct" style="top:570.0px;right:673.1px;color:#e070f0;letter-spacing:-0.02px;">9.000 0 GHz</span>
<span class="ct" style="top:570.0px;right:556.0px;color:#e070f0;">-0.43 dB</span>
<span class="ct" style="top:590.0px;left:464.3px;color:#e070f0;">3:</span>
<span class="ct" style="top:590.0px;right:673.1px;color:#e070f0;letter-spacing:-0.02px;">12.000 0 GHz</span>
<span class="ct" style="top:590.0px;right:556.0px;color:#e070f0;">-0.53 dB</span>
<span class="ct" style="top:610.0px;left:464.3px;color:#e070f0;">8:</span>
<span class="ct" style="top:610.0px;right:673.1px;color:#e070f0;letter-spacing:-0.02px;">10.230 8 GHz</span>
<span class="ct" style="top:610.0px;right:556.0px;color:#e070f0;">-0.29 dB</span>
<span class="ct" style="top:630.0px;left:464.3px;color:#40f020;">1:</span>
<span class="ct" style="top:630.0px;right:673.1px;color:#40f020;letter-spacing:-0.02px;">10.500 0 GHz</span>
<span class="ct" style="top:630.0px;right:556.0px;color:#40f020;">-26.01 dB</span>
<span class="ct" style="top:650.0px;left:464.3px;color:#40f020;">2:</span>
<span class="ct" style="top:650.0px;right:673.1px;color:#40f020;letter-spacing:-0.02px;">9.000 0 GHz</span>
<span class="ct" style="top:650.0px;right:556.0px;color:#40f020;">-25.92 dB</span>
<span class="ct" style="top:670.0px;left:464.3px;color:#40f020;">3:</span>
<span class="ct" style="top:670.0px;right:673.1px;color:#40f020;letter-spacing:-0.02px;">12.000 0 GHz</span>
<span class="ct" style="top:670.0px;right:556.0px;color:#40f020;">-28.21 dB</span>
<span class="ct" style="top:690.0px;left:464.3px;color:#40f020;">8:</span>
<span class="ct" style="top:690.0px;right:673.1px;color:#40f020;letter-spacing:-0.02px;">9.412 1 GHz</span>
<span class="ct" style="top:690.0px;right:556.0px;color:#40f020;">-24.21 dB</span>
<div style="position:absolute;left:16px;top:723px;width:27px;height:20px;background:#c8c8c8"></div>
<span class="ct" style="top:725.2px;left:25.0px;color:#000;">1</span>
<span class="ct" style="top:728.2px;left:87.5px;color:#000;letter-spacing:-0.09px;">&gt;Ch1:  Start   7.32500 GHz</span>
<span class="ct" style="top:728.2px;left:507.2px;color:#000;">RF</span>
<span class="ct" style="top:728.2px;left:544.3px;color:#000;letter-spacing:-0.1px;">0.00 dBm</span>
<span class="ct" style="top:728.2px;right:271.2px;color:#000;letter-spacing:0.1px;">Stop  13.2250 GHz</span>
<div style="position:absolute;left:285px;top:733.5px;width:22px;height:2px;background:#a5680c"></div>
<div style="position:absolute;left:312px;top:733.5px;width:22px;height:2px;background:#00a0a0"></div>
<div style="position:absolute;left:338px;top:733.5px;width:22px;height:2px;background:#e070f0"></div>
<div style="position:absolute;left:365px;top:733.5px;width:22px;height:2px;background:#40f020"></div>
<div id="wm">www.xahxmicrowave.com</div>
<div id="panel">
<div id="pborder"></div>
<div id="pwrap">
<div id="pleft"></div>
<div id="tabmain"></div>
<div class="tabtxt" style="top:64px">Main</div>
<div class="tab" style="top:104px;height:64px;border-top-left-radius:8px;padding-top:21px">Smoothing</div>
<div class="tab" style="top:167px;height:64px;padding-top:11px">Delay<br>Aperture</div>
<div class="tab" style="top:230px;height:480px;border-bottom:none"></div>
<div class="pb" style="top:47px;width:38px"><div class="led"></div></div>
<div class="pb" style="top:47px;left:48px;width:107px"><div class="lbl">Averaging</div><div class="val">1</div></div>
<div class="pb" style="top:130px"><div class="lbl" style="top:16px">Averaging<br>Restart</div></div>
<div class="pb" style="top:213px"><div class="lbl">Average Type</div><div class="val tog"><span class="off">point</span><span class="on">SWEEP</span></div></div>
<div class="pe" style="top:295px"></div>
<div class="pb" style="top:379px"><div class="lbl">IF Bandwidth</div><div class="val">1 kHz</div></div>
<div class="pb" style="top:463px"><div class="lbl" style="left:-9px;letter-spacing:-0.55px">IF BW Shape</div><div class="arr"></div><div class="val">Standard</div></div>
<div class="pb" style="top:546px"><div class="lbl" style="letter-spacing:-0.3px">LF Auto BW</div><div class="val tog"><span class="on">ON</span><span class="off" style="font-size:12.5px">off</span></div></div>
<div class="pe" style="top:628px"></div>
</div>
<div id="ptitle"><span>Avg BW</span><div id="pclose"><svg width="23" height="22" viewBox="0 0 23 22"><path d="M6.3 6.2L14.9 14.8M14.9 6.2L6.3 14.8" stroke="#fff" stroke-width="2.4" stroke-linecap="butt"/></svg></div></div>
</div>
<div class="sb" style="left:4px;width:47px">Tr 2</div>
<div class="sb" style="left:55px;width:53px">Ch 1</div>
<div class="sb" style="left:113px;width:59px">IntTrig</div>
<div class="sb" style="left:177px;width:53px">Swp *</div>
<div class="sb" style="left:235px;width:76px">BW=1k</div>
<div class="sb" style="left:315px;width:82px">C  2-Port</div>
<div class="sb dis" style="left:402px;width:53px">SrcCal</div>
<div class="sb dis" style="left:459px;width:38px">Fix</div>
<div class="sb dis" style="left:502px;width:49px">Pulse</div>
<div class="sb" style="left:556px;width:720px"></div>
<div id="bot0"></div><div id="bot1"></div><div id="bot2"></div>
</body></html>
